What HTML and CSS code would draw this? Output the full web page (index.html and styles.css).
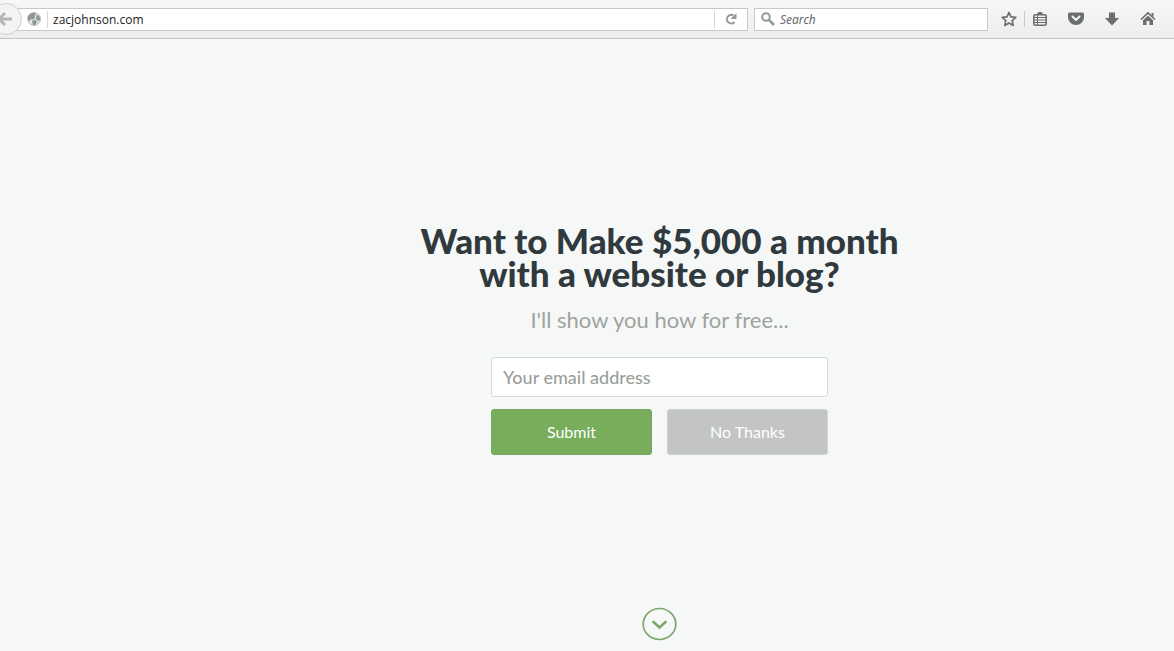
FILE: index.html
```html
<!DOCTYPE html>
<html lang="en">
<head>
  <meta charset="UTF-8">
  <meta name="viewport" content="width=device-width, initial-scale=1.0">
  <title>zacjohnson.com</title>
  <link rel="stylesheet" href="styles.css">
</head>
<body>
  <header class="toolbar">
    <div class="url-bar">
      <button class="back-btn" aria-label="Back">
        <svg width="18" height="16" viewBox="0 0 18 16"><path d="M10 2 4 8l6 6M4 8h13" fill="none" stroke="#b4b6b6" stroke-width="3"/></svg>
      </button>
      <svg class="globe" width="14" height="14" viewBox="0 0 14 14">
        <circle cx="7" cy="7" r="6.500" fill="#dfe2e1" stroke="#b9bebc"/>
        <path d="M1 4.500 3 2l4-1.200L9 2 7.500 4 8 6 6 7.500 4 7 2.500 9 1 8zM10 2.500l2.500 2 .8 3-1.800 1.500-2-1-.500-2.500zM5 8.500l3.500-.5L10 10l-2 3H6L5.500 11z" fill="#8f9693"/>
      </svg>
      <input class="url-input" type="text" aria-label="Address" value="zacjohnson.com">
      <button class="reload-btn" aria-label="Reload">
        <svg width="12" height="12" viewBox="0 0 12 12"><path d="M9.500 9A4.300 4.300 0 1 1 8.500 2.500" fill="none" stroke="#929996" stroke-width="2"/><path d="M11.500 0v6H5.500z" fill="#929996"/></svg>
      </button>
    </div>

    <div class="search-bar">
      <svg width="14" height="14" viewBox="0 0 14 14"><circle cx="5" cy="5" r="3.800" fill="none" stroke="#929996" stroke-width="2"/><path d="m8 8 5 5" stroke="#929996" stroke-width="2.500"/></svg>
      <input class="search-input" type="text" aria-label="Search" placeholder="Search">
    </div>

    <nav class="actions">
      <button class="action" aria-label="Bookmark">
        <svg width="16" height="16" viewBox="0 0 16 16"><path d="m8 1.500 2 4.400 4.800.5-3.600 3.200 1 4.800L8 12l-4.200 2.400 1-4.800L1.200 6.400 6 5.900z" fill="none" stroke="#6a6e71" stroke-width="1.700" stroke-linejoin="round"/></svg>
      </button>
      <button class="action action-list" aria-label="Bookmarks list">
        <svg width="16" height="16" viewBox="0 0 16 16"><path d="M5 3 6.500 1h3L11 3z" fill="#6a6e71"/><rect x="1.800" y="3.800" width="12.400" height="10.400" rx="1.500" fill="none" stroke="#6a6e71" stroke-width="1.600"/><path d="M2 6.500h12M2 9h12M2 11.500h12M5.500 4v10" stroke="#6a6e71" stroke-width="1"/></svg>
      </button>
      <button class="action" aria-label="Pocket">
        <svg width="16" height="16" viewBox="0 0 16 16"><path d="M1.500 1.500h13q1.500 0 1.500 1.500v3.500a8 7.500 0 0 1-16 0V3q0-1.500 1.500-1.500z" fill="#6a6e71"/><path d="m4.500 5.500 3.500 3.500 3.500-3.500" fill="none" stroke="#f5f5f5" stroke-width="2" stroke-linecap="round" stroke-linejoin="round"/></svg>
      </button>
      <button class="action" aria-label="Downloads">
        <svg width="16" height="16" viewBox="0 0 16 16"><path d="M5 1.500h6V7h4L8 14.500 1 7h4z" fill="#6a6e71"/></svg>
      </button>
      <button class="action" aria-label="Home">
        <svg width="16" height="16" viewBox="0 0 16 16"><path d="m1 8.500 7-6.500 7 6.500" fill="none" stroke="#6a6e71" stroke-width="1.700"/><path d="M3 9.300 8 4.800l5 4.500V14H9.500v-4h-3v4H3zM11.500 2h2v4l-2-2z" fill="#6a6e71"/></svg>
      </button>
    </nav>
  </header>

  <main class="page">
    <section class="hero">
      <h1>Want to Make $5,000 a month<br>with a website or blog?</h1>
      <p>I'll show you how for free...</p>
      <form class="signup">
        <input class="email" type="email" aria-label="Your email address" placeholder="Your email address">
        <div class="buttons">
          <button class="btn btn-submit" type="submit">Submit</button>
          <button class="btn btn-decline" type="button">No Thanks</button>
        </div>
      </form>
    </section>
    <a class="scroll-down" href="#content" aria-label="Scroll down">
      <svg width="35" height="34" viewBox="0 0 35 34"><ellipse cx="17.500" cy="17" rx="16.300" ry="15.500" fill="none" stroke="#7fa56c" stroke-width="1.700"/><path d="m11.500 15 6 5.500 6-5.500" fill="none" stroke="#7aa765" stroke-width="2.600" stroke-linecap="round"/></svg>
    </a>
  </main>
</body>
</html>
```
FILE: styles.css
```css
* {
  box-sizing: border-box;
}

body {
  margin: 0;
  min-height: 100vh;
  display: flex;
  flex-direction: column;
  background: #f6f8f7;
  color: #30393d;
  font-family: Lato, sans-serif;
}

button,
input {
  margin: 0;
  padding: 0;
  border: 0;
  background: none;
  font: inherit;
  color: inherit;
}

button {
  cursor: pointer;
}

svg {
  display: block;
  flex: none;
}

/* Browser toolbar */
.toolbar {
  display: flex;
  align-items: center;
  height: 39px;
  padding-right: 18px;
  background: linear-gradient(#f7f7f7, #ededed);
  border-bottom: 1px solid #c3c5c5;
  font-family: "Noto Sans", sans-serif;
  font-size: 12px;
  overflow: hidden;
}

.url-bar,
.search-bar {
  display: flex;
  align-items: center;
  height: 23px;
  background: #fff;
  border: 1px solid #c5cac8;
}

.url-bar {
  flex: 1;
  border-left: 0;
}

.back-btn {
  display: flex;
  align-items: center;
  justify-content: flex-end;
  flex: none;
  width: 32px;
  height: 32px;
  margin-left: -10px;
  padding-right: 8px;
  background: #f3f3f3;
  border: 1px solid #cfd1d1;
  border-radius: 50%;
}

.globe {
  margin: 0 6px 0 5px;
}

.url-input {
  flex: 1;
  min-width: 0;
  height: 17px;
  padding-left: 5px;
  border-left: 1px solid #d5d8d7;
  color: #222;
  font-family: "Open Sans", sans-serif;
}

.reload-btn {
  display: flex;
  align-items: center;
  justify-content: center;
  width: 33px;
  height: 17px;
  border-left: 1px solid #cfd6d3;
}

.search-bar {
  width: 234px;
  margin-left: 6px;
  padding: 0 6px;
  gap: 5px;
}

.search-input {
  flex: 1;
  min-width: 0;
}

.search-input::placeholder {
  color: #666a69;
  font-style: italic;
  opacity: 1;
}

.actions {
  display: flex;
  margin-left: 13px;
  gap: 20px;
}

.action-list {
  margin-left: -5px;
  padding-left: 7px;
  border-left: 1px solid #c9cbcb;
}

.action:first-child {
  margin-right: -8px;
}

/* Landing page */
.page {
  flex: 1;
  display: flex;
  flex-direction: column;
  align-items: center;
  padding: 32px 0 10px 145px;
}

.hero {
  flex: 1;
  display: flex;
  flex-direction: column;
  align-items: center;
  justify-content: center;
  text-align: center;
}

h1 {
  margin: 0;
  font-size: 35px;
  line-height: 33px;
  font-weight: 900;
}

.hero p {
  margin: 16px 0 23px;
  color: #9fa39e;
  font-size: 22px;
  line-height: 28px;
}

.signup {
  width: 337px;
}

.email {
  display: block;
  width: 100%;
  height: 40px;
  padding: 0 11px;
  background: #fff;
  border: 1px solid #d3dbd8;
  border-radius: 3px;
  font-size: 18px;
  font-weight: 500;
}

.email::placeholder {
  color: #9a9f9a;
  opacity: 1;
}

.buttons {
  display: grid;
  grid-template-columns: 1fr 1fr;
  gap: 15px;
  margin-top: 12px;
}

.btn {
  height: 46px;
  border-radius: 3px;
  color: #fff;
  font-size: 16px;
}

.btn-submit {
  background: #77ad5b;
  border: 1px solid #78a564;
}

.btn-decline {
  background: #c3c5c4;
  border: 1px solid #cfd4d2;
}
```
